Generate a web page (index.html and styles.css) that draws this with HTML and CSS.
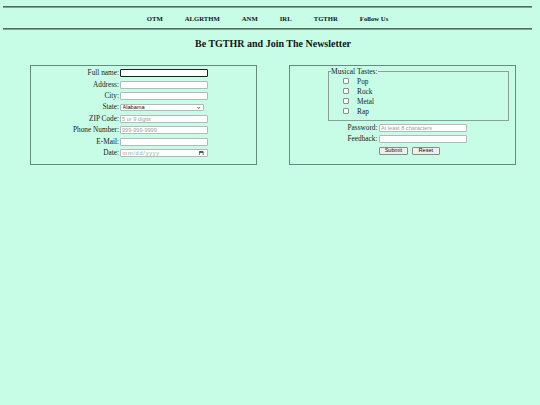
FILE: index.html
```html
<!DOCTYPE html>
<html lang="en">
<head>
<meta charset="utf-8">
<title>Be TGTHR and Join The Newsletter</title>
<link rel="stylesheet" href="styles.css">
</head>
<body>
<div class="page">
  <hr class="rule">
  <nav class="nav">
    <a href="#">OTM</a>
    <a href="#">ALGRTHM</a>
    <a href="#">ANM</a>
    <a href="#">IRL</a>
    <a href="#">TGTHR</a>
    <a href="#">Follow Us</a>
  </nav>
  <hr class="rule">
  <h1 class="title">Be TGTHR and Join The Newsletter</h1>
  <form class="forms">
    <div class="box box-left">
      <label class="lbl" for="fn">Full name:</label>
      <input class="field focused" id="fn" type="text">
      <label class="lbl" for="ad">Address:</label>
      <input class="field" id="ad" type="text">
      <label class="lbl" for="ci">City:</label>
      <input class="field" id="ci" type="text">
      <label class="lbl" for="st">State:</label>
      <span class="select-wrap">
        <select class="sel" id="st"><option>Alabama</option></select>
        <svg class="chev" viewBox="0 0 8 8" width="3.6" height="3.6"><path d="M1.2 2.6 L4 5.4 L6.8 2.6" fill="none" stroke="#222" stroke-width="1.8"/></svg>
      </span>
      <label class="lbl" for="zip">ZIP Code:</label>
      <input class="field" id="zip" type="text" placeholder="5 or 9 digits">
      <label class="lbl" for="ph">Phone Number:</label>
      <input class="field" id="ph" type="text" placeholder="999-999-9999">
      <label class="lbl" for="em">E-Mail:</label>
      <input class="field" id="em" type="text">
      <label class="lbl" for="dt">Date:</label>
      <span class="field date" id="dt">
        <span class="date-ph">mm/dd/yyyy</span>
        <svg class="cal" viewBox="0 0 10 10" width="4.6" height="4.6"><rect x="1" y="1.6" width="8" height="7.6" fill="none" stroke="#222" stroke-width="1.2"/><rect x="1" y="1.6" width="8" height="2.2" fill="#222"/><rect x="2.6" y="0" width="1.1" height="2" fill="#222"/><rect x="6.3" y="0" width="1.1" height="2" fill="#222"/></svg>
      </span>
    </div>
    <div class="box box-right">
      <fieldset class="tastes">
        <legend class="legend">Musical Tastes:</legend>
        <label class="check"><input type="checkbox" class="cb"><span>Pop</span></label>
        <label class="check"><input type="checkbox" class="cb"><span>Rock</span></label>
        <label class="check"><input type="checkbox" class="cb"><span>Metal</span></label>
        <label class="check"><input type="checkbox" class="cb"><span>Rap</span></label>
      </fieldset>
      <div class="rows">
        <label class="lbl" for="pw">Password:</label>
        <input class="field" id="pw" type="password" placeholder="At least 8 characters">
        <label class="lbl" for="fb">Feedback:</label>
        <input class="field" id="fb" type="text">
        <span></span>
        <div class="buttons">
          <button type="submit" class="btn btn-submit">Submit</button>
          <button type="reset" class="btn btn-reset">Reset</button>
        </div>
      </div>
    </div>
  </form>
</div>
</body>
</html>
```
FILE: styles.css
```css
html, body {
  margin: 0;
  padding: 0;
  background: #c7fce6;
}
body {
  font-family: "Liberation Serif", "Times New Roman", serif;
  color: #1c1c1c;
  width: 540px;
  height: 405px;
  overflow: hidden;
}
.page {
  padding: 6px 8px 0 3px;
}
.rule {
  margin: 0;
  height: 0;
  border: 0;
  border-top: 1px solid #4c6e5f;
  border-bottom: 1px solid #7fa292;
}
.nav {
  height: 20px;
  display: flex;
  justify-content: center;
  align-items: center;
  gap: 22px;
  font-size: 6.7px;
  font-weight: bold;
  padding-top: 1px;
  box-sizing: border-box;
}
.nav a {
  color: #141414;
  text-decoration: none;
}
.title {
  margin: 7.5px 0 0 0;
  padding-left: 11px;
  font-size: 10px;
  line-height: 12px;
  text-align: center;
  font-weight: bold;
  color: #141414;
}
.forms {
  display: flex;
  align-items: stretch;
  gap: 32px;
  margin-top: 15.5px;
  padding-left: 27px;
}
.box {
  width: 227px;
  box-sizing: border-box;
  border: 1px solid #628d7b;
}
.box-left {
  height: 100px;
  display: grid;
  grid-template-columns: 88px 88px;
  grid-auto-rows: 8px;
  row-gap: 3.4px;
  column-gap: 1px;
  align-items: center;
  align-content: start;
  padding: 3.3px 0 0 0;
}
.lbl {
  font-size: 7.3px;
  line-height: 8px;
  text-align: right;
  white-space: nowrap;
  color: #1c1c1c;
}
.field {
  box-sizing: border-box;
  width: 88px;
  height: 8px;
  margin: 0;
  padding: 0 1px;
  border: 1px solid #b4b8b6;
  border-radius: 1px;
  background: #fff;
  font-family: "Liberation Sans", Arial, sans-serif;
  font-size: 5.6px;
  color: #222;
  outline: none;
}
.field::placeholder {
  color: #a0a0a0;
}
.focused {
  border: 1.5px solid #202020;
}
.select-wrap {
  position: relative;
  width: 84px;
  height: 7px;
  display: flex;
}
.sel {
  -webkit-appearance: none;
  appearance: none;
  box-sizing: border-box;
  width: 84px;
  height: 7px;
  margin: 0;
  padding: 0 1.5px;
  border: 1px solid #b4b8b6;
  border-radius: 1px;
  background: #fff;
  font-family: "Liberation Sans", Arial, sans-serif;
  font-size: 5.6px;
  line-height: 5px;
  color: #111;
}
.chev {
  position: absolute;
  right: 3.5px;
  top: 1.7px;
}
.date {
  display: flex;
  align-items: center;
  justify-content: space-between;
  padding: 0 3px 0 1.5px;
}
.date-ph {
  color: #a0a0a0;
  font-size: 5.6px;
  letter-spacing: 0.75px;
}
.cal {
  display: block;
}
.box-right {
  padding: 1.6px 6px 0 38px;
}
.tastes {
  margin: 0;
  padding: 0 0 4px 14px;
  border: 1px solid #8c9f97;
  border-radius: 0;
  min-width: 0;
}
.legend {
  font-size: 7.5px;
  line-height: 8.5px;
  padding: 0 0.5px;
  margin-left: -12.5px;
  color: #1c1c1c;
}
.check {
  display: flex;
  align-items: center;
  height: 10px;
  gap: 8.5px;
  font-size: 7.3px;
}
.cb {
  -webkit-appearance: none;
  appearance: none;
  box-sizing: border-box;
  width: 5.6px;
  height: 5.6px;
  margin: 0;
  border: 1px solid #8f8f8f;
  border-radius: 1px;
  background: #fff;
}
.rows {
  display: grid;
  grid-template-columns: 87.5px 88px;
  grid-auto-rows: 8px;
  row-gap: 3.4px;
  column-gap: 1.5px;
  align-items: center;
  margin: 3px 0 0 -38px;
}
.buttons {
  display: flex;
  gap: 4.3px;
  height: 7.6px;
}
.btn {
  box-sizing: border-box;
  height: 7.6px;
  margin: 0;
  padding: 0;
  border: 1px solid #8a8a8a;
  border-radius: 1px;
  background: #efefef;
  font-family: "Liberation Sans", Arial, sans-serif;
  font-size: 5.6px;
  line-height: 5.6px;
  color: #111;
}
.btn-submit {
  width: 28.7px;
}
.btn-reset {
  width: 27.7px;
}
```
